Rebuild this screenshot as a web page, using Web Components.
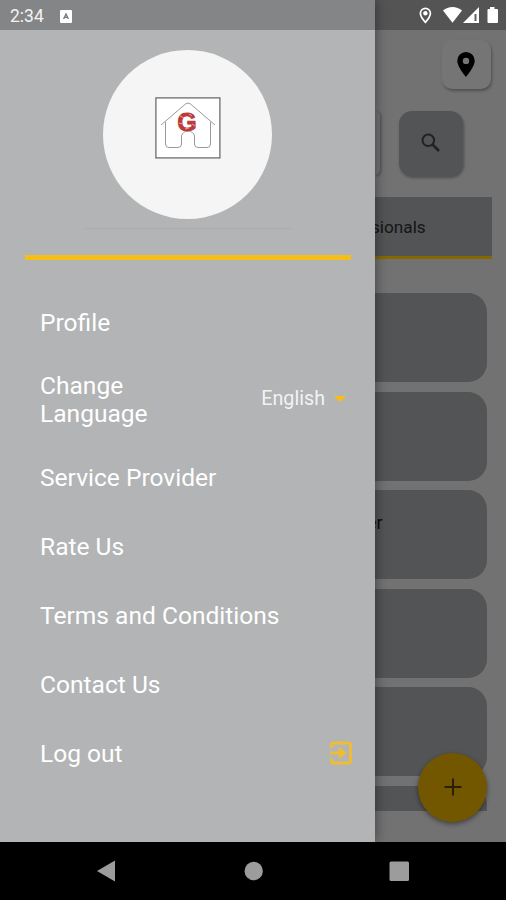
<!DOCTYPE html>
<html lang="en">
<head>
<meta charset="utf-8">
<title>Menu</title>
<style>
  body {
    margin: 0;
    background: #000;
    font-family: Roboto, sans-serif;
  }
</style>
</head>
<body>
<phone-screen>
  <status-bar slot="status" time="2:34"></status-bar>
  <side-drawer slot="drawer">
    <drawer-item label="Profile"></drawer-item>
    <drawer-item label="Change Language" tall><language-select value="English"></language-select></drawer-item>
    <drawer-item label="Service Provider"></drawer-item>
    <drawer-item label="Rate Us"></drawer-item>
    <drawer-item label="Terms and Conditions"></drawer-item>
    <drawer-item label="Contact Us"></drawer-item>
    <drawer-item label="Log out"><exit-icon></exit-icon></drawer-item>
  </side-drawer>
  <home-page slot="page">
    <service-card></service-card>
    <service-card></service-card>
    <service-card>er</service-card>
    <service-card></service-card>
    <service-card></service-card>
    <service-card></service-card>
  </home-page>
  <nav-bar slot="nav"></nav-bar>
</phone-screen>

<script>
class PhoneScreen extends HTMLElement {
  constructor() {
    super();
    this.attachShadow({ mode: 'open' });
    this.shadowRoot.innerHTML = `
      <style>
        :host {
          display: grid;
          grid-template: 842px 58px / 375px 131px;
          position: relative;
          width: 506px;
          height: 900px;
          overflow: hidden;
        }
        .nav { grid-column: 1 / 3; z-index: 2; }
        .status { position: absolute; top: 0; left: 0; right: 0; z-index: 2; }
      </style>
      <slot name="drawer"></slot>
      <slot name="page"></slot>
      <div class="nav"><slot name="nav"></slot></div>
      <div class="status"><slot name="status"></slot></div>
    `;
  }
}

class StatusBar extends HTMLElement {
  constructor() {
    super();
    this.attachShadow({ mode: 'open' });
    this.shadowRoot.innerHTML = `
      <style>
        :host {
          display: flex;
          align-items: center;
          box-sizing: border-box;
          height: 30px;
          padding: 2px 0 0 10px;
          background: rgba(0,0,0,0.26);
          color: #f4f4f4;
          font-size: 17.5px;
        }
        svg { display: block; fill: #fff; }
        .app { margin-left: 16px; }
        .icons { display: block; margin-left: auto; }
      </style>
      <span>${this.getAttribute('time')}</span>
      <svg class="app" width="12" height="13" viewBox="0 0 12 13">
        <rect width="12" height="13" rx="1"/>
        <path d="M3.6 9 6 4l2.4 5M4.6 7.4h2.8" fill="none" stroke="#777" stroke-width="1.3"/>
      </svg>
      <svg class="icons" width="90" height="28" viewBox="416 2 90 28">
        <path d="M425.400 8.300a5 5 0 0 0-5 5c0 3.600 5 9 5 9s5-5.400 5-9a5 5 0 0 0-5-5z" fill="none" stroke="#fff" stroke-width="1.700"/>
        <circle cx="425.400" cy="13.200" r="2.200"/>
        <path d="M443 10.500a14.500 14.500 0 0 1 19 0L452.500 22.700z"/>
        <path d="M479 7v16h-16z"/>
        <path d="M475.500 14v7" stroke="#606060" stroke-width="2"/>
        <path d="M490 7h4.500v2H497q1 0 1 1v12q0 1-1 1h-8.500q-1 0-1-1V10q0-1 1-1H490z"/>
      </svg>
    `;
  }
}

class SideDrawer extends HTMLElement {
  constructor() {
    super();
    this.attachShadow({ mode: 'open' });
    this.shadowRoot.innerHTML = `
      <style>
        :host {
          display: flex;
          flex-direction: column;
          align-items: center;
          box-sizing: border-box;
          padding: 49.500px 24px 0 24px;
          background: #b2b4b5;
          color: #fff;
          box-shadow: 0 0 12px rgba(0,0,0,0.45);
          z-index: 1;
        }
        .avatar {
          display: grid;
          place-items: center;
          width: 169px;
          height: 169px;
          border-radius: 50%;
          background: #f5f5f5;
          flex: none;
        }
        .avatar svg { margin-top: -13px; }
        .thin {
          width: 206px;
          height: 1px;
          margin-top: 9.500px;
          background: #a8aaab;
        }
        .thick {
          align-self: stretch;
          height: 5px;
          margin: 26px 0 28px 1px;
          background: #f6bf17;
        }
        nav { align-self: stretch; margin-right: -2px; }
      </style>
      <div class="avatar">
        <svg width="66" height="62" viewBox="0 0 66 62">
          <rect x=".9" y=".9" width="64" height="60" fill="#fff" stroke="#6c6c6c" stroke-width="1.300"/>
          <path d="M6 28 30.500 7q2.500-2 5 0L60 28M10.500 25v22q0 3.500 3.500 3.500h9q3.500 0 3.500-3.500V39q0-2 2-3l2-2h5l2 2q2 1 2 3v8q0 3.500 3.500 3.500h9q3.500 0 3.500-3.500V25" fill="none" stroke="#999" stroke-width="1"/>
          <text x="22.300" y="33.500" font-family="Liberation Sans" font-weight="700" font-size="25" fill="#bd3a3a" stroke="#bd3a3a" stroke-width=".8">G</text>
          <path d="M25 19l4 2m5-4 3 2m-13 7 3 1m3 5 4-1m3-4 3 2" stroke="#e5a09c" stroke-width="1"/>
        </svg>
      </div>
      <div class="thin"></div>
      <div class="thick"></div>
      <nav><slot></slot></nav>
    `;
  }
}

class DrawerItem extends HTMLElement {
  constructor() {
    super();
    this.attachShadow({ mode: 'open' });
    this.shadowRoot.innerHTML = `
      <style>
        :host {
          display: flex;
          align-items: center;
          justify-content: space-between;
          height: 69px;
          padding-left: 16px;
          font-size: 24.560px;
          line-height: 28px;
        }
        :host([tall]) { height: 86px; }
        :host([tall]) .label { width: 130px; padding-bottom: 1px; }
      </style>
      <span class="label">${this.getAttribute('label')}</span>
      <slot></slot>
    `;
  }
}

class LanguageSelect extends HTMLElement {
  constructor() {
    super();
    this.attachShadow({ mode: 'open' });
    this.shadowRoot.innerHTML = `
      <style>
        :host {
          display: flex;
          align-items: center;
          gap: 9px;
          margin-right: 7px;
          padding-bottom: 3px;
          font-size: 19.700px;
          color: #f3f3f3;
        }
        i {
          border: 6px solid transparent;
          border-top-color: #f9bd15;
          border-bottom: 0;
        }
      </style>
      <span>${this.getAttribute('value')}</span><i></i>
    `;
  }
}

class ExitIcon extends HTMLElement {
  constructor() {
    super();
    this.attachShadow({ mode: 'open' });
    this.shadowRoot.innerHTML = `
      <style>
        :host { display: block; padding-bottom: 2px; }
        svg { display: block; }
      </style>
      <svg width="24" height="26" viewBox="0 0 24 26">
        <path d="M2.500 7.500V5Q2.500 3 4.500 3h15q2 0 2 2v16q0 2-2 2h-15q-2 0-2-2v-2.500" fill="none" stroke="#efbd33" stroke-width="3"/>
        <path d="M1 11.500h9V6.500l7.500 6.500-7.500 6.500v-5H1z" fill="#efbd33"/>
      </svg>
    `;
  }
}

class HomePage extends HTMLElement {
  constructor() {
    super();
    this.attachShadow({ mode: 'open' });
    this.shadowRoot.innerHTML = `
      <style>
        :host {
          display: flex;
          flex-direction: column;
          position: relative;
          box-sizing: border-box;
          padding-top: 40px;
          background: #727272;
        }
        svg { display: block; }
        .pin, .search {
          display: grid;
          place-items: center;
          box-shadow: 1px 2px 3px rgba(0,0,0,0.3);
        }
        .pin {
          align-self: flex-end;
          width: 49px;
          height: 49px;
          margin-right: 15px;
          border-radius: 10px;
          background: #757575;
        }
        .pin svg { margin: 0 2px 1px 0; }
        .row { display: flex; margin-top: 22px; gap: 19px; }
        .field {
          width: 5px;
          height: 64px;
          border-radius: 0 12px 12px 0;
          background: #727272;
          box-shadow: 1px 1px 3px rgba(0,0,0,0.35);
        }
        .search {
          width: 64px;
          height: 65px;
          border-radius: 13px;
          background: #525455;
        }
        .search svg { margin-bottom: 1px; }
        .tab {
          box-sizing: border-box;
          width: 117px;
          height: 62px;
          margin-top: 21px;
          border-bottom: 3px solid #876800;
          background: #525455;
          color: #151515;
          font-size: 17.200px;
          line-height: 60px;
          text-indent: -4px;
        }
        .list {
          display: flex;
          flex-direction: column;
          gap: 9.500px;
          width: 112px;
          height: 518px;
          margin-top: 34px;
          overflow-y: clip;
        }
        .add {
          position: absolute;
          right: 19px;
          top: 753px;
          display: grid;
          place-items: center;
          width: 69px;
          height: 69px;
          border-radius: 50%;
          background: #735700;
          box-shadow: 0 2px 5px rgba(0,0,0,0.45);
        }
        .add svg { margin-bottom: 1px; }
      </style>
      <div class="pin">
        <svg width="18" height="25" viewBox="0 0 18 25">
          <path fill-rule="evenodd" d="M9 0a8.700 8.700 0 0 0-8.700 8.800C.3 15 9 25 9 25s8.700-10 8.700-16.200A8.700 8.700 0 0 0 9 0zm0 5.700a3.200 3.200 0 1 1 0 6.400 3.200 3.200 0 0 1 0-6.400z"/>
        </svg>
      </div>
      <div class="row">
        <div class="field"></div>
        <div class="search">
          <svg width="20" height="20" viewBox="0 0 20 20" fill="none" stroke="#202223">
            <circle cx="7.300" cy="7.300" r="5.800" stroke-width="2"/>
            <path d="m11.500 11.500 6.500 6.500" stroke-width="2.500"/>
          </svg>
        </div>
      </div>
      <div class="tab">sionals</div>
      <div class="list"><slot></slot></div>
      <div class="add">
        <svg width="18" height="18" viewBox="0 0 18 18"><path d="M9 .5v17M.5 9h17" stroke="#282000" stroke-width="2"/></svg>
      </div>
    `;
  }
}

class ServiceCard extends HTMLElement {
  constructor() {
    super();
    this.attachShadow({ mode: 'open' });
    this.shadowRoot.innerHTML = `
      <style>
        :host {
          display: block;
          flex: none;
          box-sizing: border-box;
          height: 89px;
          padding-top: 22px;
          border-radius: 0 19px 19px 0;
          background: #525455;
          color: #0c0c0c;
          font-size: 18px;
          text-indent: -8px;
        }
      </style>
      <slot></slot>
    `;
  }
}

class NavBar extends HTMLElement {
  constructor() {
    super();
    this.attachShadow({ mode: 'open' });
    this.shadowRoot.innerHTML = `
      <style>
        :host { display: block; background: #000; }
        svg { display: block; fill: #9c9c9c; }
      </style>
      <svg width="506" height="58" viewBox="0 842 506 58">
        <path d="M97 871l18-10.500v21z"/>
        <circle cx="253.700" cy="871" r="9.200"/>
        <rect x="389.500" y="861.500" width="19.500" height="19.500" rx="1.500"/>
      </svg>
    `;
  }
}

customElements.define('phone-screen', PhoneScreen);
customElements.define('status-bar', StatusBar);
customElements.define('side-drawer', SideDrawer);
customElements.define('drawer-item', DrawerItem);
customElements.define('language-select', LanguageSelect);
customElements.define('exit-icon', ExitIcon);
customElements.define('home-page', HomePage);
customElements.define('service-card', ServiceCard);
customElements.define('nav-bar', NavBar);
</script>
</body>
</html>
